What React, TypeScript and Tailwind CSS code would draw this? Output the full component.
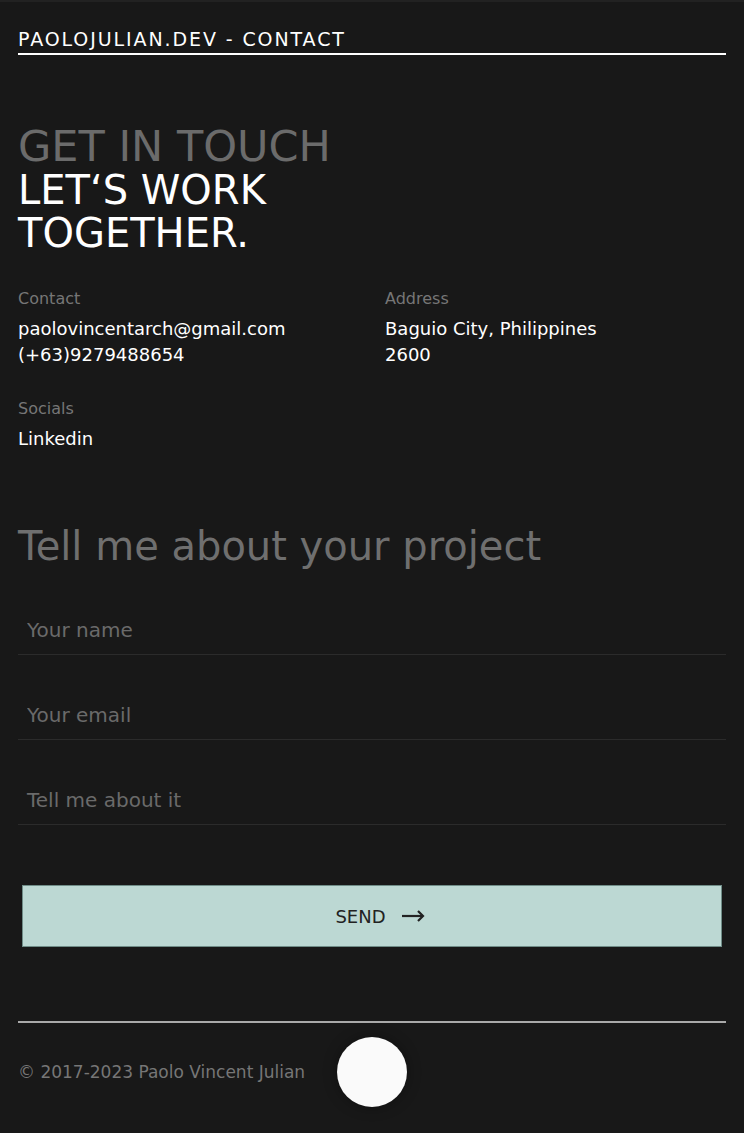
import React from "react";

const Field = ({ placeholder, area }: { placeholder: string; area?: boolean }) => (
  <div className="border-b border-[#2b2b2b]">
    {area ? (
      <textarea
        rows={1}
        placeholder={placeholder}
        className="block w-full resize-none bg-transparent px-[9px] pt-[2px] pb-[12px] text-[20px] leading-[24px] text-white placeholder:text-[#6a6a6a] outline-none"
      />
    ) : (
      <input
        type="text"
        placeholder={placeholder}
        className="block w-full bg-transparent px-[9px] pt-[2px] pb-[12px] text-[20px] leading-[24px] text-white placeholder:text-[#6a6a6a] outline-none"
      />
    )}
  </div>
);

const Info = ({ label, lines }: { label: string; lines: string[] }) => (
  <div>
    <p className="text-[16px] leading-[20px] text-[#767676]">{label}</p>
    <div className="mt-[7px] text-[18px] leading-[26px] text-white">
      {lines.map((l) => (
        <p key={l}>{l}</p>
      ))}
    </div>
  </div>
);

export default function App() {
  return (
    <div
      className="relative min-h-[1133px] bg-[#181818] border-t-2 border-[#222]"
      style={{ fontFamily: '"DejaVu Sans", sans-serif' }}
    >
      <div className="px-[18px]">
        <header className="pt-[26px]">
          <h1 className="border-b-2 border-white pb-[3px] text-[19px] leading-[22px] tracking-[1.9px] text-white">
            PAOLOJULIAN.DEV - CONTACT
          </h1>
        </header>

        <section className="mt-[68px]">
          <h2 className="text-[43px] leading-[46px] text-[#6b6b6b]">GET IN TOUCH</h2>
          <h3 className="text-[40px] leading-[43px] text-white">
            LET‘S WORK
            <br />
            TOGETHER.
          </h3>
        </section>

        <section className="mt-[34px] grid grid-cols-[367px_1fr]">
          <Info label="Contact" lines={["paolovincentarch@gmail.com", "(+63)9279488654"]} />
          <Info label="Address" lines={["Baguio City, Philippines", "2600"]} />
          <div className="mt-[31px]">
            <Info label="Socials" lines={["Linkedin"]} />
          </div>
        </section>

        <h2 className="mt-[70px] text-[40px] leading-[48px] text-[#6f6f6f]">
          Tell me about your project
        </h2>

        <form className="mt-[46px] flex flex-col gap-[46px]">
          <Field placeholder="Your name" />
          <Field placeholder="Your email" />
          <Field placeholder="Tell me about it" area />
        </form>

        <div className="mt-[60px] px-[4px]">
          <button className="flex h-[62px] w-full items-center justify-center gap-[16px] border border-[#6f8c87] bg-[#bcd8d3] pl-[16px] text-[18px] text-[#222]">
            SEND
            <svg width="23" height="12" viewBox="0 0 23 12" fill="none" stroke="#222" strokeWidth="2.2">
              <path d="M0 6h21" />
              <path d="M16 1l5 5-5 5" />
            </svg>
          </button>
        </div>

        <footer className="mt-[74px] border-t-2 border-[#a9a9a9] pt-[37px] pb-[50px]">
          <p className="text-[17px] leading-[24px] text-[#767676]">© 2017-2023 Paolo Vincent Julian</p>
        </footer>
      </div>

      <button className="absolute left-[337px] top-[1035px] h-[70px] w-[70px] rounded-full bg-[#fafafa] shadow-[0_0_14px_rgba(0,0,0,0.35)]" />
    </div>
  );
}
